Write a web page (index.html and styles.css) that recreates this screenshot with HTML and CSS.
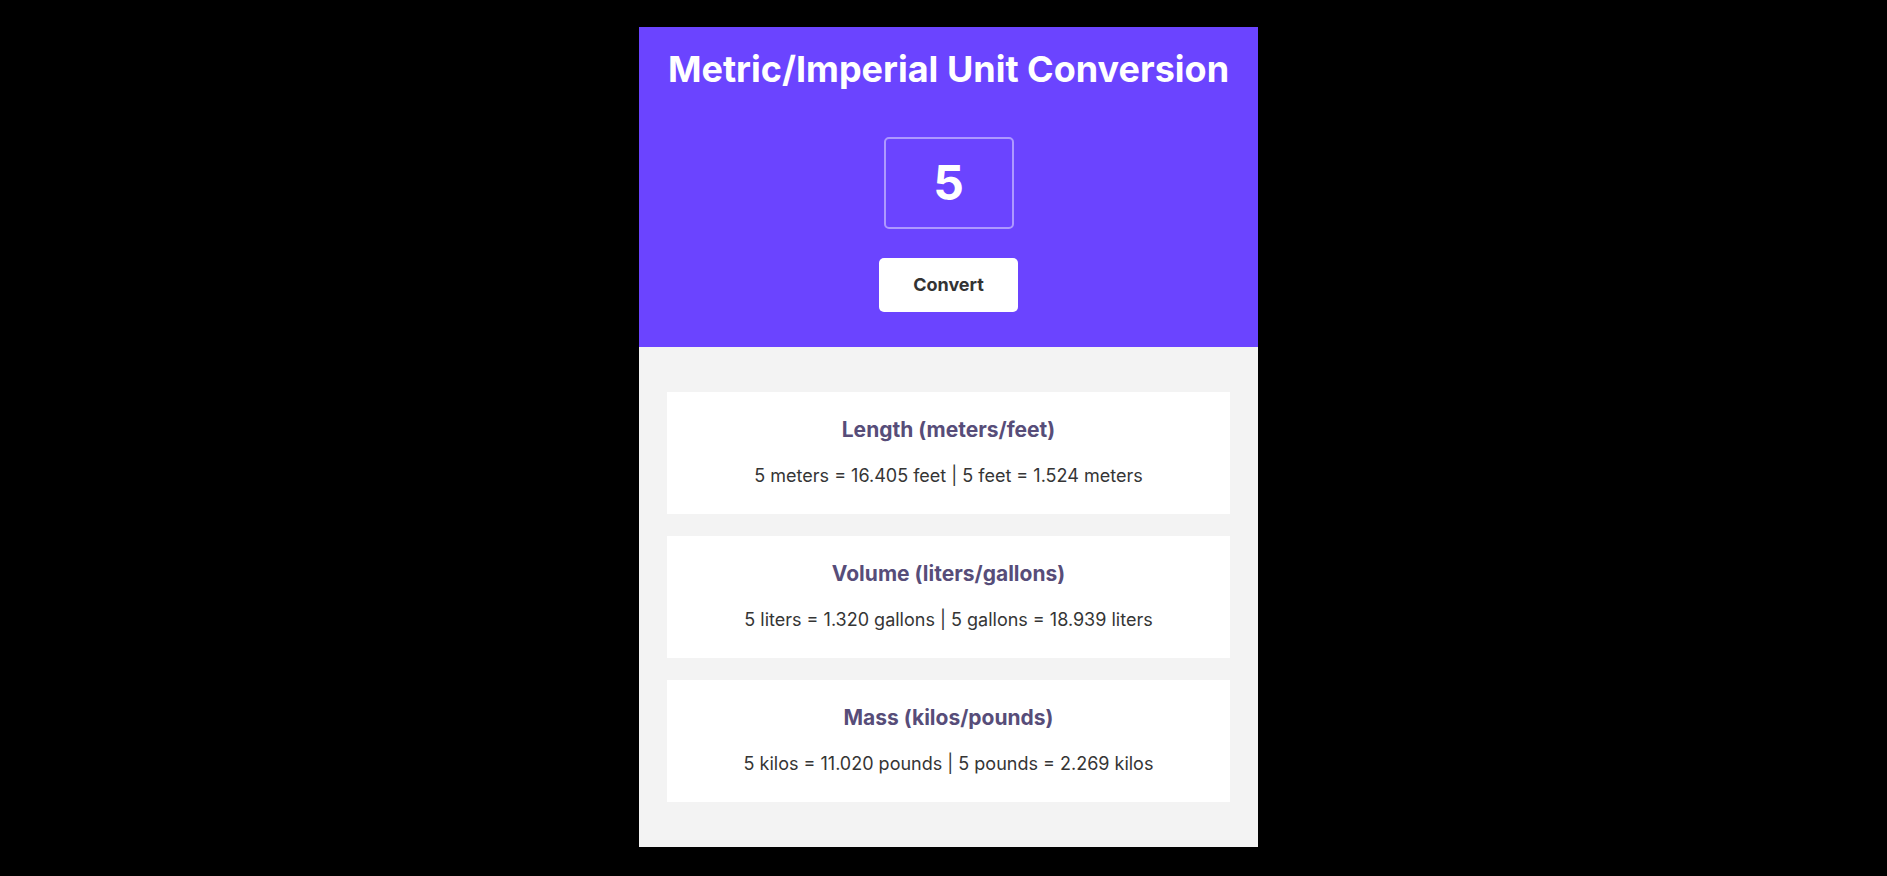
FILE: index.html
```html
<!DOCTYPE html>
<html lang="en">
<head>
<meta charset="utf-8">
<title>Metric/Imperial Unit Conversion</title>
<link rel="stylesheet" href="styles.css">
</head>
<body>
  <main class="app">
    <header class="hero">
      <h1 class="hero-title">Metric/Imperial Unit Conversion</h1>
      <input class="value-input" type="text" value="5" aria-label="Value">
      <button class="convert-btn" type="button">Convert</button>
    </header>
    <section class="results">
      <article class="card">
        <h2 class="card-title">Length (meters/feet)</h2>
        <p class="card-text">5 meters = 16.405 feet | 5 feet = 1.524 meters</p>
      </article>
      <article class="card">
        <h2 class="card-title">Volume (liters/gallons)</h2>
        <p class="card-text">5 liters = 1.320 gallons | 5 gallons = 18.939 liters</p>
      </article>
      <article class="card">
        <h2 class="card-title">Mass (kilos/pounds)</h2>
        <p class="card-text">5 kilos = 11.020 pounds | 5 pounds = 2.269 kilos</p>
      </article>
    </section>
  </main>
</body>
</html>
```

FILE: styles.css
```css
* {
  box-sizing: border-box;
}

html, body {
  margin: 0;
  padding: 0;
  background: #000;
}

body {
  font-family: Inter, "Noto Sans", sans-serif;
  display: flex;
  justify-content: center;
  padding: 27px 0 0 10px;
  min-height: 100vh;
}

.app {
  width: 619px;
  display: flex;
  flex-direction: column;
  align-self: flex-start;
}

.hero {
  background: #6b44ff;
  display: flex;
  flex-direction: column;
  align-items: center;
  padding: 21px 0 35px;
}

.hero-title {
  margin: 0 0 45px;
  color: #fff;
  font-size: 36px;
  font-weight: 700;
  line-height: 1.21;
}

.value-input {
  width: 130px;
  height: 92px;
  margin: 0 0 29px;
  background: transparent;
  border: 2px solid rgba(255, 255, 255, 0.45);
  border-radius: 5px;
  color: #fff;
  font-family: Inter, "Noto Sans", sans-serif;
  font-size: 48px;
  font-weight: 700;
  text-align: center;
  padding: 0;
  outline: none;
}

.convert-btn {
  width: 139px;
  height: 54px;
  background: #fff;
  border: none;
  border-radius: 5px;
  color: #333;
  font-family: Inter, "Noto Sans", sans-serif;
  font-size: 18px;
  font-weight: 700;
  cursor: pointer;
}

.results {
  background: #f3f3f3;
  padding: 45px 28px 45px;
  display: flex;
  flex-direction: column;
  gap: 22px;
}

.card {
  background: #fff;
  height: 122px;
  padding: 26px 20px 0;
  text-align: center;
}

.card-title {
  margin: 0 0 23px;
  color: #574d79;
  font-size: 21px;
  font-weight: 700;
  line-height: 24px;
}

.card-text {
  margin: 0;
  color: #353535;
  font-size: 18px;
  line-height: 22px;
}
```
